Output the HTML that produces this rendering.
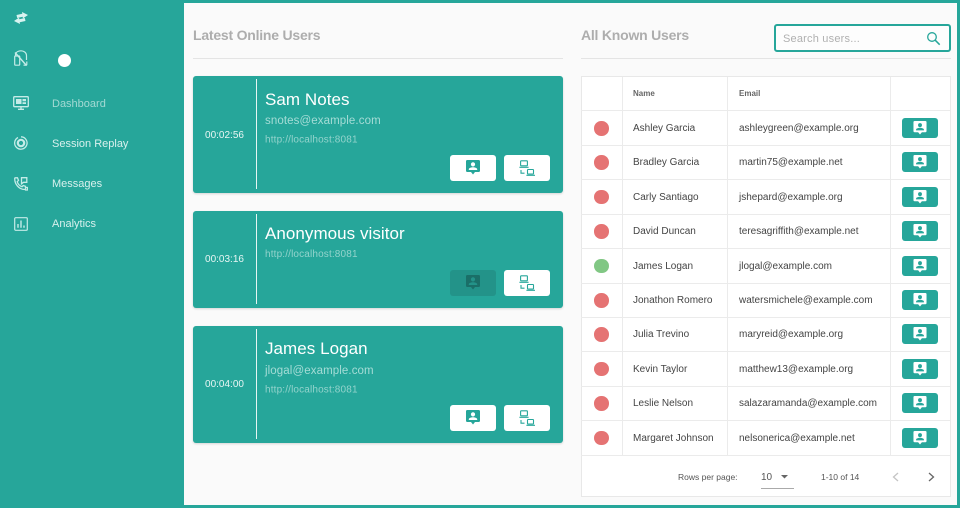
<!DOCTYPE html>
<html><head><meta charset="utf-8"><style>
*{box-sizing:border-box}
html,body{margin:0;padding:0}
body{width:960px;height:508px;position:relative;overflow:hidden;background:#26a69a;font-family:"Liberation Sans",sans-serif}
div,span.a{position:absolute;white-space:nowrap}
svg{position:absolute;display:block}
.main{left:184px;top:3px;width:773px;height:502px;background:#fafafa}
.nav{left:52px;font-size:11px;color:#d8f0ed;line-height:14px}
.h{font-size:14px;font-weight:bold;color:#adadad;line-height:18px;letter-spacing:-.22px}
.rule{height:1px;background:#e4e4e4;top:58px}
.card{left:193px;width:370px;background:#26a69a;border-radius:3px;box-shadow:0 1px 2px rgba(0,0,0,.15)}
.vl{left:63px;top:3px;width:1px;background:#e6f5f3}
.time{left:0;width:63px;text-align:center;font-size:10px;color:#e8f6f4;line-height:12px}
.nm{left:72px;font-size:17px;color:#fff;line-height:20px;letter-spacing:.05px}
.em{left:72px;font-size:11.5px;color:#a5dcd6;line-height:14px;letter-spacing:.1px}
.url{left:72px;font-size:10px;color:#93d3cc;line-height:12px;letter-spacing:.15px}
.btn{width:46px;height:26px;background:#fff;border-radius:3px}
.btn.off{background:#239389}
.tbl{left:581px;top:76px;width:370px;height:421px;background:#fff;border:1px solid #e8e8e8}
.hl{left:581px;width:369px;height:1px;background:#ebebeb}
.cl{width:1px;top:77px;height:378px;background:#ebebeb}
.th{font-size:8px;font-weight:bold;color:#666;line-height:10px;top:89px}
.n,.e{font-size:10px;color:#444;line-height:12px;margin-top:1px}
.n{left:633px}.e{left:739px}
.dot{left:594px;width:14.500px;height:14.500px;border-radius:50%;background:#e57373}
.b2{left:902px;width:36px;height:20px;background:#26a69a;border-radius:3px}
.pg{font-size:8.500px;color:#555;line-height:10px;top:472px}
</style></head><body>
<svg width="0" height="0" style="position:absolute"><defs>
<symbol id="chat" viewBox="1 1 14 15"><path fill="currentColor" fill-rule="evenodd" d="M2.200 1h11.600c.7 0 1.200.5 1.200 1.200v9.600c0 .7-.5 1.200-1.200 1.200H10l-2 2.500-2-2.500H2.200C1.500 13 1 12.500 1 11.800V2.200C1 1.500 1.500 1 2.200 1zM8 3.300a2.100 2.100 0 1 0 0 4.200 2.100 2.100 0 0 0 0-4.200zM3.800 11h8.400v-.8c0-1.400-2.800-2-4.200-2s-4.200.6-4.200 2z"/></symbol>
<symbol id="net" viewBox="0 0 16 16" fill="none" stroke="currentColor"><rect x="1.600" y=".8" width="6.800" height="5" rx=".6" stroke-width="1.100"/><path d="M.4 7.300h9.200" stroke-width="1.100"/><path d="M2 10v3.200h3.500" stroke-width="1.100"/><rect x="8.500" y="9.500" width="6" height="4.600" rx=".6" stroke-width="1.100"/><path d="M7.400 15.300H16" stroke-width="1.100"/></symbol>
</defs></svg>

<div class="main"></div>

<svg style="left:14px;top:12px" width="14" height="12" viewBox="0 0 14 12" fill="#d8f3f0"><path d="M8 0l6 3-5 3.400-.4-1.700L3.200 6 2.500 3l5.800-1.200zM6 12L0 9l5-3.400.4 1.700L10.800 6l.7 3-5.800 1.200z"/></svg>
<svg style="left:14px;top:50px" width="14" height="16" viewBox="0 0 14 16" fill="none" stroke="#c5ece8" stroke-width="1.200"><path d="M1.500 6V4.500C2 2 4.500.8 7 .8s5.500 1.500 5.500 5V10"/><rect x=".7" y="6" width="5" height="9.200" rx=".8"/><path d="M9.500 15.200h2.300c.6 0 1-.4 1-1V11.500"/><path d="M1 2.500l11.500 13" stroke-width="1.400"/></svg>
<div style="left:58px;top:54px;width:13px;height:13px;border-radius:50%;background:#fff"></div>

<svg style="left:13px;top:96px" width="16" height="14" viewBox="0 0 16 14" fill="none" stroke="#c5ece8"><rect x=".7" y=".7" width="14.600" height="10" rx="1" stroke-width="1.300"/><path d="M3 3h5.500v5H3zM9.500 3H13v2.200H9.500zM9.500 6.200H13V8H9.500z" fill="#c5ece8" stroke="none"/><path d="M8 11v2M5 13.300h6" stroke-width="1.300"/></svg>
<div class="nav" style="top:97px;color:#a3d9d3">Dashboard</div>

<svg style="left:14px;top:136px" width="14" height="14" viewBox="0 0 14 14" fill="none" stroke="#c5ece8"><path d="M4 1.500A6.200 6.200 0 1 0 7 .8" stroke-width="1.300"/><circle cx="7" cy="7" r="3.200" stroke-width="2.200"/></svg>
<div class="nav" style="top:137px">Session Replay</div>

<svg style="left:14px;top:177px" width="14" height="14" viewBox="0 0 14 14" fill="none" stroke="#c5ece8" stroke-width="1.300"><path d="M1.500.8h2l1 2.700L3.200 4.700c.6 2.200 2.600 4.300 4.800 5l1.200-1.200 2.300.8v2.300c0 .5-.4.9-.9.9C4.800 12.500.7 7 .7 1.600c0-.4.300-.8.800-.8z"/><path d="M7.500.7h5.300v4.600H9.500L7.500 6.800zM12 10.500h1.500v2.500H11"/></svg>
<div class="nav" style="top:177px">Messages</div>

<svg style="left:14px;top:217px" width="14" height="14" viewBox="0 0 14 14" fill="none" stroke="#c5ece8" stroke-width="1.200"><rect x=".7" y=".7" width="12.600" height="12.600" rx="1"/><path d="M4 7v3.700M7 3.500v7.200M10 8.500v2.200" stroke-width="1.400"/></svg>
<div class="nav" style="top:217px">Analytics</div>

<div class="h" style="left:193px;top:26px">Latest Online Users</div>
<div class="rule" style="left:193px;width:370px"></div>
<div class="h" style="left:581px;top:26px">All Known Users</div>
<div class="rule" style="left:581px;width:370px"></div>

<div style="left:774px;top:24px;width:177px;height:28px;border:2px solid #26a69a;border-radius:3px;background:#fdfdfd"></div>
<div style="left:783px;top:32px;font-size:11px;color:#b0b0b0;line-height:14px;letter-spacing:.2px">Search users...</div>
<svg style="left:926px;top:31px" width="15" height="15" viewBox="0 0 15 15" fill="none" stroke="#26a69a" stroke-width="1.300"><circle cx="6" cy="6" r="4.300"/><path d="M9.200 9.200l4.500 4.500" stroke-width="1.500"/></svg>

<div class="card" style="top:76px;height:117px"><div class="vl" style="height:110px"></div>
<div class="time" style="top:54px">00:02:56</div>
<div class="nm" style="top:14px">Sam Notes</div>
<div class="em" style="top:38px">snotes@example.com</div>
<div class="url" style="top:57px;margin-top:0;transform:translateY(1.500px)">http://localhost:8081</div>
<div class="btn" style="left:257px;top:79px"><svg style="left:16px;top:5px;color:#26a69a" width="14" height="15"><use href="#chat"/></svg></div>
<div class="btn" style="left:311px;top:79px"><svg style="left:15px;top:5px;color:#26a69a" width="16" height="16"><use href="#net"/></svg></div>
</div>

<div class="card" style="top:211px;height:97px"><div class="vl" style="height:90px"></div>
<div class="time" style="top:43px">00:03:16</div>
<div class="nm" style="top:13px">Anonymous visitor</div>
<div class="url" style="top:37px;transform:translateY(1px)">http://localhost:8081</div>
<div class="btn off" style="left:257px;top:59px"><svg style="left:16px;top:5px;color:#1a6f68" width="14" height="15"><use href="#chat"/></svg></div>
<div class="btn" style="left:311px;top:59px"><svg style="left:15px;top:5px;color:#26a69a" width="16" height="16"><use href="#net"/></svg></div>
</div>

<div class="card" style="top:326px;height:117px"><div class="vl" style="height:110px"></div>
<div class="time" style="top:53px">00:04:00</div>
<div class="nm" style="top:13px">James Logan</div>
<div class="em" style="top:38px">jlogal@example.com</div>
<div class="url" style="top:57px;transform:translateY(1.500px)">http://localhost:8081</div>
<div class="btn" style="left:257px;top:79px"><svg style="left:16px;top:5px;color:#26a69a" width="14" height="15"><use href="#chat"/></svg></div>
<div class="btn" style="left:311px;top:79px"><svg style="left:15px;top:5px;color:#26a69a" width="16" height="16"><use href="#net"/></svg></div>
</div>

<div class="tbl"></div>
<div class="cl" style="left:622px"></div><div class="cl" style="left:727px"></div><div class="cl" style="left:890px"></div>
<div class="hl" style="top:110px"></div><div class="hl" style="top:145px"></div><div class="hl" style="top:179px"></div><div class="hl" style="top:214px"></div><div class="hl" style="top:248px"></div><div class="hl" style="top:283px"></div><div class="hl" style="top:317px"></div><div class="hl" style="top:351px"></div><div class="hl" style="top:386px"></div><div class="hl" style="top:420px"></div><div class="hl" style="top:455px"></div>
<div class="th" style="left:633px">Name</div><div class="th" style="left:739px">Email</div>

<div class="dot" style="top:121px"></div><div class="n" style="top:122px">Ashley Garcia</div><div class="e" style="top:122px">ashleygreen@example.org</div><div class="b2" style="top:118px"><svg style="left:11px;top:3px;color:#fff" width="14" height="14"><use href="#chat"/></svg></div>
<div class="dot" style="top:155.400px"></div><div class="n" style="top:156px">Bradley Garcia</div><div class="e" style="top:156px">martin75@example.net</div><div class="b2" style="top:152px"><svg style="left:11px;top:3px;color:#fff" width="14" height="14"><use href="#chat"/></svg></div>
<div class="dot" style="top:189.800px"></div><div class="n" style="top:191px">Carly Santiago</div><div class="e" style="top:191px">jshepard@example.org</div><div class="b2" style="top:187px"><svg style="left:11px;top:3px;color:#fff" width="14" height="14"><use href="#chat"/></svg></div>
<div class="dot" style="top:224.200px"></div><div class="n" style="top:225px">David Duncan</div><div class="e" style="top:225px">teresagriffith@example.net</div><div class="b2" style="top:221px"><svg style="left:11px;top:3px;color:#fff" width="14" height="14"><use href="#chat"/></svg></div>
<div class="dot" style="top:258.600px;background:#81c784"></div><div class="n" style="top:260px">James Logan</div><div class="e" style="top:260px">jlogal@example.com</div><div class="b2" style="top:256px"><svg style="left:11px;top:3px;color:#fff" width="14" height="14"><use href="#chat"/></svg></div>
<div class="dot" style="top:293px"></div><div class="n" style="top:294px">Jonathon Romero</div><div class="e" style="top:294px">watersmichele@example.com</div><div class="b2" style="top:290px"><svg style="left:11px;top:3px;color:#fff" width="14" height="14"><use href="#chat"/></svg></div>
<div class="dot" style="top:327.400px"></div><div class="n" style="top:328px">Julia Trevino</div><div class="e" style="top:328px">maryreid@example.org</div><div class="b2" style="top:324px"><svg style="left:11px;top:3px;color:#fff" width="14" height="14"><use href="#chat"/></svg></div>
<div class="dot" style="top:361.800px"></div><div class="n" style="top:363px">Kevin Taylor</div><div class="e" style="top:363px">matthew13@example.org</div><div class="b2" style="top:359px"><svg style="left:11px;top:3px;color:#fff" width="14" height="14"><use href="#chat"/></svg></div>
<div class="dot" style="top:396.200px"></div><div class="n" style="top:397px">Leslie Nelson</div><div class="e" style="top:397px">salazaramanda@example.com</div><div class="b2" style="top:393px"><svg style="left:11px;top:3px;color:#fff" width="14" height="14"><use href="#chat"/></svg></div>
<div class="dot" style="top:430.600px"></div><div class="n" style="top:432px">Margaret Johnson</div><div class="e" style="top:432px">nelsonerica@example.net</div><div class="b2" style="top:428px"><svg style="left:11px;top:3px;color:#fff" width="14" height="14"><use href="#chat"/></svg></div>

<div class="pg" style="left:678px">Rows per page:</div>
<div class="pg" style="left:761px;font-size:10px;top:473px">10</div>
<svg style="left:781px;top:475px" width="7" height="4"><path d="M0 0h7L3.500 3.500z" fill="#666"/></svg>
<div style="left:761px;top:488px;width:33px;height:1px;background:#aaa"></div>
<div class="pg" style="left:821px">1-10 of 14</div>
<svg style="left:892px;top:472px" width="7" height="10" fill="none" stroke="#c4c4c4" stroke-width="1.300"><path d="M6 1L1.500 5 6 9"/></svg>
<svg style="left:928px;top:472px" width="7" height="10" fill="none" stroke="#666" stroke-width="1.300"><path d="M1 1l4.500 4L1 9"/></svg>
</body></html>
